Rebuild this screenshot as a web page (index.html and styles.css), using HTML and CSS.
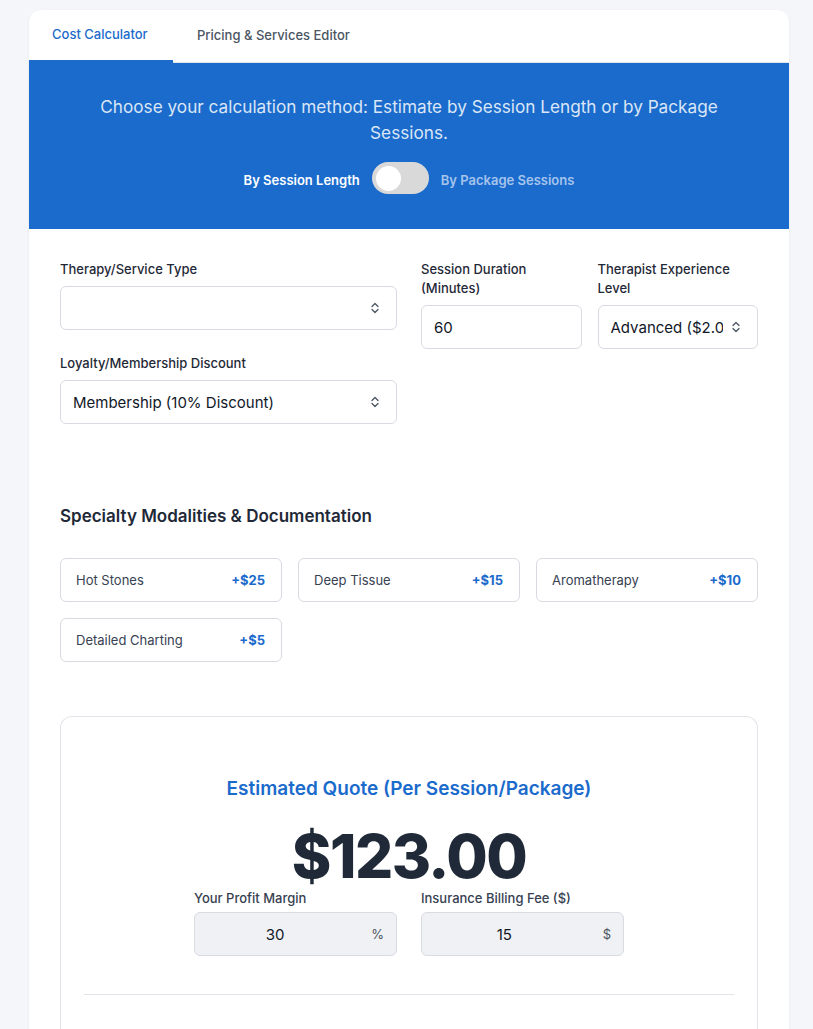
FILE: index.html
```html
<!DOCTYPE html>
<html>
<head>
<meta charset="utf-8">
<link rel="stylesheet" href="styles.css">
</head>
<body>
<div class="card">
  <div class="tabs">
    <div class="tab active">Cost Calculator</div>
    <div class="tab">Pricing &amp; Services Editor</div>
  </div>
  <div class="banner">
    <p class="banner-text">Choose your calculation method: Estimate by Session Length or by Package Sessions.</p>
    <div class="toggle-row">
      <span class="toggle-label on">By Session Length</span>
      <span class="toggle"><span class="knob"></span></span>
      <span class="toggle-label off">By Package Sessions</span>
    </div>
  </div>
  <div class="content">
    <div class="fields">
      <div class="col-left">
        <div class="field">
          <label class="label">Therapy/Service Type</label>
          <div class="select"><span class="select-text"></span>
            <svg class="chev" width="10" height="14" viewBox="0 0 10 14"><path d="M2 5.5L5 2.5L8 5.5M2 8.5L5 11.5L8 8.5" fill="none" stroke="#4b5563" stroke-width="1.3" stroke-linecap="round" stroke-linejoin="round"/></svg>
          </div>
        </div>
        <div class="field">
          <label class="label">Loyalty/Membership Discount</label>
          <div class="select"><span class="select-text">Membership (10% Discount)</span>
            <svg class="chev" width="10" height="14" viewBox="0 0 10 14"><path d="M2 5.5L5 2.5L8 5.5M2 8.5L5 11.5L8 8.5" fill="none" stroke="#4b5563" stroke-width="1.3" stroke-linecap="round" stroke-linejoin="round"/></svg>
          </div>
        </div>
      </div>
      <div class="col-right">
        <div class="field">
          <label class="label">Session Duration (Minutes)</label>
          <div class="input"><span class="select-text">60</span></div>
        </div>
        <div class="field">
          <label class="label">Therapist Experience Level</label>
          <div class="select"><span class="select-text">Advanced ($2.00/min)</span>
            <svg class="chev" width="10" height="14" viewBox="0 0 10 14"><path d="M2 5.5L5 2.5L8 5.5M2 8.5L5 11.5L8 8.5" fill="none" stroke="#4b5563" stroke-width="1.3" stroke-linecap="round" stroke-linejoin="round"/></svg>
          </div>
        </div>
      </div>
    </div>

    <h2 class="section-title">Specialty Modalities &amp; Documentation</h2>
    <div class="mods">
      <div class="mod"><span>Hot Stones</span><span class="price">+$25</span></div>
      <div class="mod"><span>Deep Tissue</span><span class="price">+$15</span></div>
      <div class="mod"><span>Aromatherapy</span><span class="price">+$10</span></div>
      <div class="mod"><span>Detailed Charting</span><span class="price">+$5</span></div>
    </div>

    <div class="quote">
      <h3 class="quote-title">Estimated Quote (Per Session/Package)</h3>
      <div class="amount">$123.00</div>
      <div class="adjust">
        <div class="field">
          <label class="label small">Your Profit Margin</label>
          <div class="num"><span class="num-val">30</span><span class="suffix">%</span></div>
        </div>
        <div class="field">
          <label class="label small">Insurance Billing Fee ($)</label>
          <div class="num"><span class="num-val">15</span><span class="suffix">$</span></div>
        </div>
      </div>
      <hr class="divider">
    </div>
  </div>
</div>
</body>
</html>
```

FILE: styles.css
```css
* { box-sizing: border-box; }
html, body { margin: 0; padding: 0; }
body {
  background: #f5f6fa;
  font-family: Inter, "Noto Sans", sans-serif;
  color: #1f2937;
  padding: 10px 24px 0 29px;
}
.card {
  width: 760px;
  background: #fff;
  border-radius: 12px 12px 0 0;
  box-shadow: 0 1px 3px rgba(0,0,0,0.06);
  overflow: hidden;
}
.tabs {
  display: flex;
  height: 53px;
  border-bottom: 1px solid #dfe3ea;
}
.tab {
  padding: 0 23px 2px;
  font-size: 13px;
  font-weight: 500;
  color: #4b5563;
  display: flex;
  align-items: center;
  border-bottom: 2px solid transparent;
  margin-bottom: -1px;
}
.tab.active {
  color: #1a6bcc;
  border-bottom: 3px solid #1a6bcc;
  width: 144px;
}
.tab + .tab { padding-left: 24px; }
.banner {
  background: #1a6bcc;
  padding: 31px 32px 35px;
  text-align: center;
}
.banner-text {
  margin: 0 auto;
  font-size: 17.2px;
  line-height: 26px;
  color: #dbe6f6;
  max-width: 640px;
}
.toggle-row {
  display: flex;
  justify-content: center;
  align-items: center;
  gap: 12px;
  margin-top: 16px;
}
.toggle-label { font-size: 13px; font-weight: 600; padding-top: 4px; }
.toggle-label.on { color: #fff; }
.toggle-label.off { color: #a6c4ec; }
.toggle {
  width: 57px;
  height: 32px;
  border-radius: 16px;
  background: #d9d9d9;
  display: flex;
  align-items: center;
  padding: 0 4px;
}
.knob {
  width: 25px;
  height: 25px;
  border-radius: 50%;
  background: #fff;
}
.content { padding: 31px 31px 0; }
.fields {
  display: grid;
  grid-template-columns: minmax(0, 1fr) minmax(0, 1fr);
  gap: 24px;
}
.col-left { display: flex; flex-direction: column; gap: 24px; }
.col-right { display: grid; grid-template-columns: minmax(0, 1fr) minmax(0, 1fr); gap: 16px; align-items: start; }
.field { display: flex; flex-direction: column; }
.label {
  font-size: 13px;
  font-weight: 500;
  line-height: 19px;
  color: #1f2937;
  margin-bottom: 7px;
}
.select, .input {
  height: 44px;
  border: 1px solid #d8dbe1;
  border-radius: 6px;
  display: flex;
  align-items: center;
  padding: 0 16px 0 12px;
  background: #fff;
}
.select-text {
  flex: 1;
  min-width: 0;
  font-size: 15px;
  color: #111827;
  white-space: nowrap;
  overflow: hidden;
  margin-right: 8px;
}
.chev { flex: none; }
.section-title {
  font-size: 17px;
  font-weight: 600;
  margin: 81px 0 31px;
  line-height: 22px;
  color: #1f2937;
}
.mods {
  display: grid;
  grid-template-columns: repeat(3, 1fr);
  gap: 16px;
}
.mod {
  height: 44px;
  border: 1px solid #d8dbe1;
  border-radius: 6px;
  display: flex;
  align-items: center;
  justify-content: space-between;
  padding: 0 16px 0 15px;
  font-size: 13px;
  color: #374151;
}
.price { color: #1a6bcc; font-weight: 700; }
.quote {
  margin-top: 54px;
  border: 1px solid #e2e4e9;
  border-radius: 12px 12px 0 0;
  padding: 59px 23px 0;
  border-bottom: none;
  height: 330px;
}
.quote-title {
  margin: 0;
  text-align: center;
  font-size: 19px;
  line-height: 26px;
  font-weight: 600;
  color: #1a6bcc;
}
.amount {
  text-align: center;
  font-size: 60px;
  font-weight: 800;
  line-height: 60px;
  letter-spacing: -1.5px;
  color: #1f2937;
  margin-top: 24px;
  margin-bottom: 3px;
}
.adjust {
  display: grid;
  grid-template-columns: 1fr 1fr;
  gap: 24px;
  width: 430px;
  margin: 0 auto;
}
.label.small { color: #374151; margin-bottom: 4px; }
.num {
  height: 44px;
  border: 1px solid #d8dbe1;
  border-radius: 6px;
  background: #f0f1f4;
  display: flex;
  align-items: center;
  padding: 0 12px 0 0;
  font-size: 15px;
}
.num-val { flex: 1; text-align: center; padding-right: 28px; padding-left: 12px; color: #111827; }
.suffix { font-size: 13px; color: #4b5563; }
.divider {
  border: none;
  border-top: 1px solid #e2e4e9;
  margin: 38px 0 0;
}
```
